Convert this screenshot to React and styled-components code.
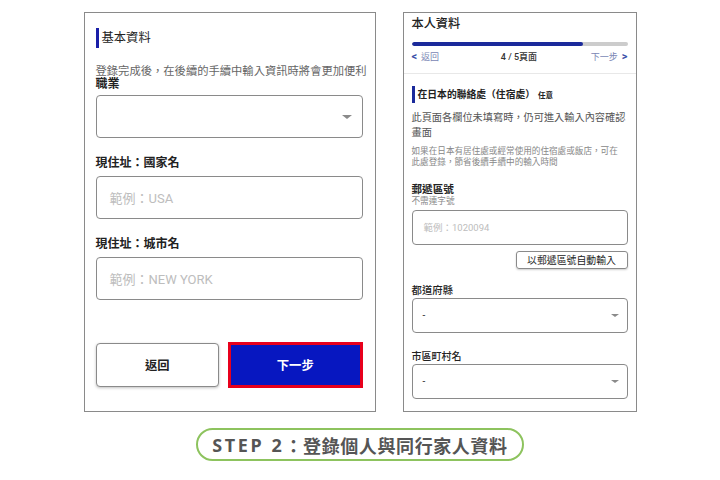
import React from "react";
import styled, { createGlobalStyle } from "styled-components";

const Global = createGlobalStyle`
  html, body { margin: 0; padding: 0; background: #fff; }
  body { font-family: Roboto, "Noto Sans CJK TC", sans-serif; color: #222; }
  * { box-sizing: border-box; }
`;

const Page = styled.div`
  width: 720px;
  height: 480px;
  padding-top: 12px;
  display: flex;
  flex-direction: column;
  align-items: center;
`;

const Row = styled.div`
  display: flex;
  gap: 27px;
`;

const Panel = styled.div`
  width: ${(p) => p.$w}px;
  height: 400px;
  border: 1px solid #8a8a8a;
  display: flex;
  flex-direction: column;
  padding: ${(p) => p.$pad};
`;

const Title = styled.div`
  height: 20px;
  line-height: 20px;
  border-left: 3px solid #1a1fa8;
  padding-left: 3px;
  font-size: 12.3px;
  color: #222;
`;

const Desc = styled.div`
  margin-top: 17px;
  font-size: 11.3px;
  line-height: 13px;
  color: #666;
  white-space: nowrap;
`;

const Label = styled.div`
  margin-top: ${(p) => p.$mt || 0}px;
  font-size: ${(p) => p.$fs || 12}px;
  line-height: ${(p) => p.$lh || 14}px;
  font-weight: ${(p) => p.$fw || 700};
  color: #222;
  white-space: nowrap;
`;

const Field = styled.div`
  margin-top: ${(p) => p.$mt}px;
  height: ${(p) => p.$h}px;
  border: 1px solid #8a8a8a;
  border-radius: 4px;
  display: flex;
  align-items: center;
  justify-content: space-between;
  padding: 0 ${(p) => p.$pr}px 0 ${(p) => p.$pl}px;
  font-size: ${(p) => p.$fs}px;
  color: ${(p) => (p.$ph ? "#bdbdbd" : "#333")};
  background: #fff;
`;

const Caret = styled.span`
  width: 0;
  height: 0;
  border-left: ${(p) => p.$s}px solid transparent;
  border-right: ${(p) => p.$s}px solid transparent;
  border-top: ${(p) => p.$s * 0.9}px solid #8a8a8a;
`;

const Buttons = styled.div`
  margin-top: 42px;
  display: flex;
  align-items: center;
  gap: 9px;
`;

const Btn = styled.div`
  width: ${(p) => p.$w}px;
  height: ${(p) => p.$h}px;
  display: flex;
  align-items: center;
  justify-content: center;
  font-size: 12.3px;
  font-weight: 700;
  border-radius: ${(p) => (p.$primary ? 0 : 4)}px;
  border: ${(p) => (p.$primary ? "3px solid #e8001c" : "1px solid #8a8a8a")};
  background: ${(p) => (p.$primary ? "#0717c0" : "#fff")};
  color: ${(p) => (p.$primary ? "#fff" : "#222")};
  box-shadow: ${(p) => (p.$primary ? "none" : "0 1px 3px rgba(0,0,0,0.25)")};
`;

const Header = styled.div`
  padding: 3px 8px 10px;
  border-bottom: 1px solid #e8e8e8;
`;

const Body = styled.div`
  padding: 0 8px;
  display: flex;
  flex-direction: column;
`;

const HTitle = styled.div`
  font-size: 12.2px;
  line-height: 16px;
  font-weight: 500;
  color: #222;
`;

const Track = styled.div`
  margin-top: 10px;
  height: 4px;
  border-radius: 2px;
  background: #cccccc;
  overflow: hidden;
`;

const Fill = styled.div`
  height: 100%;
  background: #1b2a9b;
  border-radius: 2px;
`;

const Nav = styled.div`
  margin-top: 5px;
  height: 12px;
  display: flex;
  align-items: center;
  justify-content: space-between;
  font-size: 9px;
  line-height: 12px;
`;

const NavLink = styled.span`
  color: #7a86b4;
  display: flex;
  align-items: center;
  gap: 4px;
`;

const Chev = styled.span`
  color: #3a4fa8;
  font-size: 11px;
  font-weight: 700;
  line-height: 12px;
`;

const PageNo = styled.span`
  color: #333;
  font-weight: 500;
  margin-left: 8px;
`;

const SubHead = styled.div`
  margin-top: 12px;
  height: 17px;
  line-height: 17px;
  border-left: 3px solid #1b2a9b;
  padding-left: 3px;
  font-size: 9.8px;
  font-weight: 700;
  color: #222;
  white-space: nowrap;
`;

const Opt = styled.span`
  font-size: 7.5px;
  margin-left: 3px;
`;

const Notice = styled.div`
  margin-top: 8px;
  font-size: 10.2px;
  line-height: 14.5px;
  color: #555;
`;

const Small = styled.div`
  margin-top: ${(p) => p.$mt || 0}px;
  font-size: 8.6px;
  line-height: ${(p) => p.$lh}px;
  color: #888;
  white-space: nowrap;
`;

const AutoBtn = styled.div`
  margin-top: 6px;
  align-self: flex-end;
  width: 112px;
  height: 18px;
  border: 1px solid #8a8a8a;
  border-radius: 3px;
  display: flex;
  align-items: center;
  justify-content: center;
  font-size: 9.9px;
  color: #222;
  box-shadow: 0 1px 2px rgba(0,0,0,0.2);
`;

const Pill = styled.div`
  margin-top: 16px;
  width: 328px;
  height: 33px;
  border: 2px solid #8dc35e;
  border-radius: 17px;
  display: flex;
  align-items: center;
  justify-content: center;
  font-family: "Noto Sans", "Noto Sans CJK TC", sans-serif;
  font-size: 18px;
  font-weight: 700;
  color: #555;
  letter-spacing: 0.6px;
`;

const Step = styled.span`
  letter-spacing: 2.6px;
`;

export default function App() {
  return (
    <>
      <Global />
      <Page>
        <Row>
          <Panel $w={292} $pad="15px 12px 0 11px">
            <Title>基本資料</Title>
            <Desc>登錄完成後，在後續的手續中輸入資訊時將會更加便利</Desc>
            <Label $lh={12}>職業</Label>
            <Field $mt={5} $h={43} $pl={13} $pr={10} $fs={13}>
              <span />
              <Caret $s={5} />
            </Field>
            <Label $mt={18}>現住址：國家名</Label>
            <Field $mt={6} $h={43} $pl={13} $pr={10} $fs={13} $ph>
              範例：USA
            </Field>
            <Label $mt={18}>現住址：城市名</Label>
            <Field $mt={6} $h={43} $pl={13} $pr={10} $fs={13} $ph>
              範例：NEW YORK
            </Field>
            <Buttons>
              <Btn $w={124} $h={44}>返回</Btn>
              <Btn $w={135} $h={46} $primary>下一步</Btn>
            </Buttons>
          </Panel>
          <Panel $w={234} $pad="0">
            <Header>
              <HTitle>本人資料</HTitle>
              <Track>
                <Fill style={{ width: "79.6%" }} />
              </Track>
              <Nav>
                <NavLink>
                  <Chev>&lt;</Chev>返回
                </NavLink>
                <PageNo>4 / 5頁面</PageNo>
                <NavLink>
                  下一步<Chev>&gt;</Chev>
                </NavLink>
              </Nav>
            </Header>
            <Body>
              <SubHead>
                在日本的聯絡處（住宿處）<Opt>任意</Opt>
              </SubHead>
              <Notice>此頁面各欄位未填寫時，仍可進入輸入內容確認畫面</Notice>
              <Small $mt={6} $lh={11}>
                如果在日本有居住處或經常使用的住宿處或飯店，可在
                <br />
                此處登錄，節省後續手續中的輸入時間
              </Small>
              <Label $mt={15} $fs={10.6} $lh={13}>郵遞區號</Label>
              <Small $lh={11}>不需連字號</Small>
              <Field $mt={2.5} $h={35} $pl={11} $pr={8} $fs={9.5} $ph>
                範例：1020094
              </Field>
              <AutoBtn>以郵遞區號自動輸入</AutoBtn>
              <Label $mt={15.5} $fs={10.4} $lh={13} $fw={500}>都道府縣</Label>
              <Field $mt={0.5} $h={35} $pl={10} $pr={8} $fs={10}>
                -
                <Caret $s={4} />
              </Field>
              <Label $mt={17.5} $fs={10} $lh={13} $fw={500}>市區町村名</Label>
              <Field $mt={0.5} $h={35} $pl={10} $pr={8} $fs={10}>
                -
                <Caret $s={4} />
              </Field>
            </Body>
          </Panel>
        </Row>
        <Pill>
          <Step>STEP 2</Step>：登錄個人與同行家人資料
        </Pill>
      </Page>
    </>
  );
}
